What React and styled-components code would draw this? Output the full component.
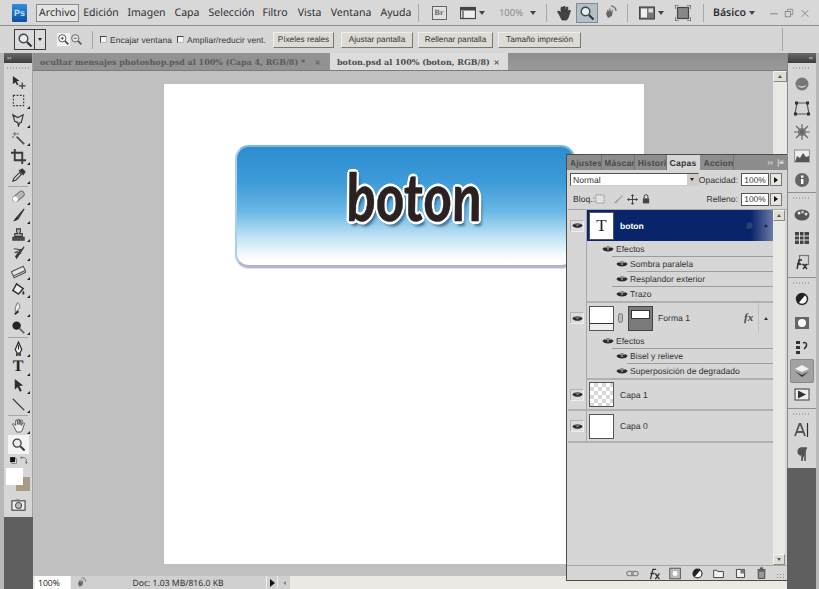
import React from 'react';
import styled, { createGlobalStyle } from 'styled-components';

const ui = `"Noto Sans", "Liberation Sans", sans-serif`;
const small = `"Liberation Sans", "Noto Sans", sans-serif`;

const Global = createGlobalStyle`
  html, body { margin: 0; padding: 0; background: #5f5f5f; overflow: hidden; }
  * { box-sizing: border-box; }
  #root { text-rendering: geometricPrecision; }
`;

/* ---------- shell ---------- */
const Frame = styled.div`
  width: 819px;
  height: 589px;
  display: flex;
  flex-direction: column;
  background: #d6d6d6;
  font-family: ${ui};
  color: #333;
  overflow: hidden;
`;

const MenuBar = styled.div`
  height: 26px;
  display: flex;
  align-items: center;
  padding-left: 12px;
  background: #d8d8d8;
  border-bottom: 1px solid #8e8e8e;
`;

const Logo = styled.div`
  width: 15px;
  height: 18px;
  margin-right: 9px;
  display: flex;
  align-items: center;
  justify-content: center;
  font: bold 9px "Liberation Sans", sans-serif;
  color: #bfe3ff;
  background: linear-gradient(#2f8fdc, #0f4f9e);
  border-radius: 1px;
`;

const MenuItem = styled.div`
  width: ${p => p.$w}px;
  height: 18px;
  margin-right: ${p => p.$gap || 0}px;
  display: flex;
  align-items: center;
  justify-content: center;
  font-size: 10.5px;
  font-weight: ${p => (p.$bold ? 600 : 400)};
  color: #2e2e2e;
  white-space: nowrap;
  background: ${p => (p.$active ? '#e4e4e4' : 'transparent')};
  border: 1px solid ${p => (p.$active ? '#8a8a8a' : 'transparent')};
`;

const BarSep = styled.div`
  width: 1px;
  height: 18px;
  background: #a8a8a8;
  margin: 0 ${p => p.$r || 0}px 0 ${p => p.$l || 0}px;
`;

const BarIcon = styled.div`
  width: ${p => p.$w || 20}px;
  height: 20px;
  margin-right: ${p => p.$gap || 0}px;
  display: flex;
  align-items: center;
  justify-content: center;
  font-size: 9.5px;
  color: ${p => p.$c || '#555'};
  background: ${p => (p.$active ? '#b4c0c8' : 'transparent')};
  border: 1px solid ${p => (p.$active ? '#808a90' : 'transparent')};
`;

const BridgeBox = styled.div`
  width: 15px;
  height: 14px;
  display: flex;
  align-items: center;
  justify-content: center;
  font: bold 8px "Liberation Serif", serif;
  color: #666;
  background: #e0e0e0;
  border: 1px solid #666;
`;

const Caret = styled.span`
  margin-left: ${p => p.$l || 0}px;
  margin-right: ${p => p.$r || 0}px;
  border-left: 3px solid transparent;
  border-right: 3px solid transparent;
  border-top: 4px solid #444;
`;

const OptionsBar = styled.div`
  height: 27px;
  display: flex;
  align-items: center;
  padding-left: 14px;
  background: #d6d6d6;
  position: relative;
`;

const ToolPick = styled.div`
  width: 32px;
  height: 21px;
  display: flex;
  border: 1px solid #3c3c3c;
  margin-right: 11px;
  background: #dcdcdc;
`;

const ToolPickMain = styled.div`
  width: 20px;
  display: flex;
  align-items: center;
  justify-content: center;
  border-right: 1px solid #3c3c3c;
`;

const ToolPickArrow = styled.div`
  flex: 1;
  display: flex;
  align-items: center;
  justify-content: center;
  &::after {
    content: '';
    border-left: 2.5px solid transparent;
    border-right: 2.5px solid transparent;
    border-top: 3px solid #222;
  }
`;

const ZoomToggle = styled.span`
  display: flex;
  background: ${p => (p.$on ? '#f2f2f2' : 'transparent')};
`;

const OptCheck = styled.label`
  display: flex;
  align-items: center;
  gap: 3px;
  width: ${p => p.$w}px;
  font: 8.4px ${small};
  letter-spacing: 0.1px;
  color: #333;
  white-space: nowrap;
`;

const CheckBox = styled.span`
  width: 7px;
  height: 7px;
  background: #f4f4f4;
  border: 1px solid #444;
  border-right-color: #bbb;
  border-bottom-color: #bbb;
`;

const OptButton = styled.div`
  width: ${p => p.$w}px;
  height: 16px;
  margin-right: ${p => p.$gap}px;
  display: flex;
  align-items: center;
  justify-content: center;
  font: 8.2px ${small};
  color: #333;
  white-space: nowrap;
  background: #dedbd4;
  border: 1px solid #eee;
  border-right-color: #777;
  border-bottom-color: #777;
`;

const OptEnd = styled.div`
  position: absolute;
  left: 782px;
  top: 2px;
  bottom: 2px;
  width: 1px;
  background: #a4a4a4;
`;

const Workspace = styled.div`
  flex: 1;
  display: flex;
  position: relative;
  min-height: 0;
`;

/* ---------- left toolbox ---------- */
const ToolRail = styled.div`
  width: 33px;
  display: flex;
  flex-direction: column;
  padding-left: 4px;
  background: linear-gradient(#b8b8b8, #b8b8b8) left / 4px 100% no-repeat, #5f5f5f;
`;

const ToolBox = styled.div`
  height: 464px;
  display: flex;
  flex-direction: column;
  align-items: center;
  background: #d6d6d6;
  border-right: 1px solid #a0a0a0;
`;

const DarkCap = styled.div`
  align-self: stretch;
  height: ${p => p.$h || 10}px;
  display: flex;
  align-items: center;
  justify-content: ${p => (p.$end ? 'flex-end' : 'flex-start')};
  padding: 0 3px;
  background: linear-gradient(#6a6a6a, #3c3c3c);
  color: #ddd;
  font-size: 7px;
  line-height: 1;
`;

const Grip = styled.div`
  align-self: stretch;
  height: ${p => p.$h || 10}px;
  margin: 0 ${p => p.$m || 3}px;
  background: repeating-linear-gradient(90deg, #aaa 0 1px, transparent 1px 3px) center / 100% 2px no-repeat;
`;

const Tool = styled.div`
  position: relative;
  width: 21px;
  height: 18.6px;
  display: flex;
  align-items: center;
  justify-content: center;
  background: ${p => (p.$active ? '#f4f4f4' : 'transparent')};
  &::after {
    content: ${p => (p.$more ? "''" : 'none')};
    position: absolute;
    right: -1px;
    bottom: 1px;
    border-left: 3px solid transparent;
    border-bottom: 3px solid #222;
  }
`;

const TypeTool = styled.span`
  font: bold 16px "Liberation Serif", serif;
  color: #222;
`;

const ToolSep = styled.div`
  align-self: stretch;
  height: 1px;
  margin: 1px 4px;
  background: #a6a6a6;
`;

const MiniColors = styled.div`
  width: 21px;
  height: 11px;
  margin-top: 1px;
  display: flex;
  align-items: center;
  justify-content: space-between;
  padding: 0 1px;
`;

const Swatches = styled.div`
  position: relative;
  width: 25px;
  height: 25px;
  margin: 2px 0 3px 0;
`;

const Swatch = styled.div`
  position: absolute;
  left: ${p => p.$l}px;
  top: ${p => p.$t}px;
  width: ${p => p.$s}px;
  height: ${p => p.$s}px;
  background: ${p => p.$c};
`;

/* ---------- document ---------- */
const DocColumn = styled.div`
  flex: 1;
  min-width: 0;
  display: flex;
  flex-direction: column;
  background: #c0c0c0;
`;

const TabBar = styled.div`
  height: 18px;
  display: flex;
  background: linear-gradient(#8e8e8e, #9a9a9a);
  border-bottom: 1px solid #7c7c7c;
`;

const DocTab = styled.div`
  width: ${p => p.$w}px;
  display: flex;
  align-items: center;
  justify-content: space-between;
  padding: 0 8px 0 7px;
  margin-right: 1px;
  font: bold 8px "DejaVu Serif", "Liberation Serif", serif;
  white-space: nowrap;
  color: ${p => (p.$active ? '#4a4a4a' : '#5a5a5a')};
  background: ${p => (p.$active ? '#dcdcdc' : '#929292')};
`;

const DocMiddle = styled.div`
  flex: 1;
  display: flex;
  min-height: 0;
`;

const Pasteboard = styled.div`
  flex: 1;
  display: flex;
  align-items: center;
  justify-content: center;
  padding-left: 2px;
`;

const Sheet = styled.div`
  width: 480px;
  height: 480px;
  background: #fff;
  padding: 61px 0 0 71px;
`;

const WebButton = styled.div`
  width: 340px;
  height: 123px;
  padding: 0 0 18px 18px;
  display: flex;
  align-items: center;
  justify-content: center;
  border-radius: 14px;
  background: linear-gradient(#2c8dcf 0%, #3f9bd9 30%, #6ab8e6 55%, #b0dbf1 72%, #f0f8fc 90%, #ffffff 97%);
  border: 2px solid #7db7de;
  border-bottom: 3px solid #b8b1d2;
  border-left-color: #a9d0ea;
  box-shadow: 0 1px 1px #ddd;
`;

const ButtonLabel = styled.div`
  font: italic bold 66px "Lato", "Noto Sans", sans-serif;
  line-height: 1;
  color: #2a2222;
  transform: scaleX(0.83) skewX(6deg);
  -webkit-text-stroke: 0.5px #2a2222;
  text-shadow: 3px 0 0 #fff, -3px 0 0 #fff, 0 3px 0 #fff, 0 -3px 0 #fff,
    2px 2px 0 #fff, -2px 2px 0 #fff, 2px -2px 0 #fff, -2px -2px 0 #fff,
    3px 5px 3px rgba(20, 50, 90, 0.6);
`;

const VScroll = styled.div`
  width: ${p => p.$w || 14}px;
  display: flex;
  flex-direction: column;
  justify-content: space-between;
  background: #e8e8e4;
`;

const ScrollBtn = styled.div`
  height: 11px;
  display: flex;
  align-items: center;
  justify-content: center;
  background: #e0ddd2;
  border: 1px solid #f4f4f4;
  border-right-color: #8a8a8a;
  border-bottom-color: #8a8a8a;
  &::after {
    content: '';
    border-left: 2.5px solid transparent;
    border-right: 2.5px solid transparent;
    border-${p => (p.$down ? 'top' : 'bottom')}: 3px solid #555;
  }
`;

const StatusBar = styled.div`
  height: 13px;
  display: flex;
  font-size: 8.6px;
  background: #ece9e4;
  padding-left: 2px;
`;

const StatusZoom = styled.div`
  width: 35px;
  padding-left: 3px;
  display: flex;
  align-items: center;
  background: #fff;
  color: #333;
`;

const StatusBtn = styled.div`
  width: ${p => p.$w}px;
  display: flex;
  align-items: center;
  justify-content: center;
  background: #d0d0d0;
  border-left: 1px solid #eee;
`;

const StatusText = styled.div`
  width: 176px;
  display: flex;
  align-items: center;
  justify-content: center;
  background: #d0d0d0;
`;

const PlayArrow = styled.span`
  border-top: ${p => p.$s || 4}px solid transparent;
  border-bottom: ${p => p.$s || 4}px solid transparent;
  border-left: ${p => (p.$s || 4) + 1}px solid #111;
`;

const BackArrow = styled.span`
  border-top: 2px solid transparent;
  border-bottom: 2px solid transparent;
  border-right: 3px solid #888;
`;

/* ---------- right dock ---------- */
const DockRail = styled.div`
  width: 32px;
  display: flex;
  flex-direction: column;
  padding-right: 3px;
  background: linear-gradient(#b8b8b8, #b8b8b8) right top / 3px 100% no-repeat, #5f5f5f;
`;

const Dock = styled.div`
  height: 415px;
  display: flex;
  flex-direction: column;
  align-items: center;
  background: #d6d6d6;
  border-left: 1px solid #8a8a8a;
`;

const DockGroup = styled.div`
  align-self: stretch;
  display: flex;
  flex-direction: column;
  align-items: center;
  height: ${p => p.$h}px;
  border-bottom: ${p => (p.$last ? 'none' : '1px solid #8f8f8f')};
`;

const DockItem = styled.div`
  width: 24px;
  height: 24px;
  display: flex;
  align-items: center;
  justify-content: center;
  background: ${p => (p.$active ? '#a2a2a2' : 'transparent')};
  border-radius: 2px;
  border: 1px solid ${p => (p.$active ? '#8a8a8a' : 'transparent')};
`;

/* ---------- layers panel ---------- */
const Panel = styled.div`
  position: absolute;
  left: 566px;
  top: 101px;
  width: 221px;
  height: 427px;
  display: flex;
  flex-direction: column;
  background: #d6d6d6;
  border: 1px solid #4c4c4c;
  border-right: none;
  font-family: ${small};
`;

const PanelTabs = styled.div`
  height: 15px;
  display: flex;
  align-items: flex-end;
  padding-left: 4px;
  background: #8d8d8d;
`;

const PanelTab = styled.div`
  width: ${p => p.$w}px;
  height: 15px;
  display: flex;
  align-items: center;
  justify-content: center;
  overflow: hidden;
  margin-right: ${p => p.$gap || 0}px;
  font-size: 8.6px;
  font-weight: 700;
  letter-spacing: 0.2px;
  white-space: nowrap;
  color: ${p => (p.$active ? '#333' : '#4a4a4a')};
  background: ${p => (p.$active ? '#d6d6d6' : '#8d8d8d')};
  border-right: 1px solid ${p => (p.$active ? '#d6d6d6' : '#747474')};
`;

const PanelMenu = styled.div`
  margin-left: auto;
  height: 15px;
  display: flex;
  align-items: center;
  gap: 5px;
  padding-right: 3px;
  color: #eee;
  font-size: 8px;
`;

const PanelRow = styled.div`
  height: ${p => p.$h}px;
  display: flex;
  align-items: center;
  padding: 0 5px 0 3px;
  font-size: 8.6px;
  color: #333;
`;

const Select = styled.div`
  width: 129px;
  height: 13px;
  display: flex;
  align-items: center;
  justify-content: space-between;
  padding-left: 2px;
  background: #fff;
  border: 1px solid #555;
  border-right-color: #ccc;
  border-bottom-color: #ccc;
`;

const SelectArrow = styled.span`
  width: 11px;
  height: 11px;
  display: flex;
  align-items: center;
  justify-content: center;
  background: #cfcdc6;
  &::after {
    content: '';
    border-left: 2.5px solid transparent;
    border-right: 2.5px solid transparent;
    border-top: 3px solid #222;
  }
`;

const LockLabel = styled.span`
  width: 20px;
  margin-left: 3px;
  white-space: nowrap;
`;

const RowLabel = styled.span`
  margin-left: auto;
  margin-right: 3px;
`;

const NumberBox = styled.div`
  width: 28px;
  height: 13px;
  display: flex;
  align-items: center;
  justify-content: center;
  background: #fff;
  border: 1px solid #555;
  font-size: 8.4px;
`;

const NumberArrow = styled.div`
  width: 12px;
  height: 13px;
  margin-left: 1px;
  display: flex;
  align-items: center;
  justify-content: center;
  background: #e8e6df;
  border: 1px solid #777;
`;

const LockIcon = styled.span`
  width: 14px;
  margin-right: ${p => p.$gap || 0}px;
  display: flex;
  justify-content: center;
`;

const PanelBody = styled.div`
  flex: 1;
  display: flex;
  min-height: 0;
  margin-left: 1px;
  border-top: 1px solid #a8a8a8;
`;

const LayerList = styled.div`
  width: 205px;
  display: flex;
  flex-direction: column;
`;

const Layer = styled.div`
  display: flex;
  height: ${p => p.$h}px;
  border-bottom: ${p => (p.$line ? '2px solid #b0b0b0' : 'none')};
`;

const EyeCell = styled.div`
  width: 19px;
  flex: none;
  display: flex;
  align-items: center;
  justify-content: center;
  border-right: 1px solid #a8a8a8;
`;

const EyeBox = styled.div`
  width: 14px;
  height: 12px;
  display: flex;
  align-items: center;
  justify-content: center;
  background: #dcdcdc;
  border: 1px solid #eee;
  border-top-color: #b4b4b4;
  border-left-color: #b4b4b4;
`;

const LayerMain = styled.div`
  flex: 1;
  display: flex;
  align-items: center;
  padding-left: 2px;
  font-size: 8.6px;
  color: ${p => (p.$selected ? '#fff' : '#333')};
  font-weight: ${p => (p.$selected ? 700 : 400)};
  background: ${p => (p.$selected ? 'linear-gradient(90deg, #0a246a 0 88%, #6b7aa6 100%)' : 'transparent')};
`;

const Thumb = styled.div`
  width: 25px;
  height: ${p => p.$h || 25}px;
  flex: none;
  display: flex;
  align-items: center;
  justify-content: center;
  background: #fff;
  border: 1px solid #555;
  font: 17px "Liberation Serif", serif;
  color: #222;
`;

const CheckerThumb = styled(Thumb)`
  background-color: #fff;
  background-image: linear-gradient(45deg, #d8d8d8 25%, transparent 25%, transparent 75%, #d8d8d8 75%),
    linear-gradient(45deg, #d8d8d8 25%, transparent 25%, transparent 75%, #d8d8d8 75%);
  background-size: 8px 8px;
  background-position: 0 0, 4px 4px;
`;

const ShapeThumb = styled(Thumb)`
  position: relative;
  &::after {
    content: '';
    position: absolute;
    left: 0;
    right: 0;
    bottom: 0;
    height: 6px;
    border-top: 1px solid #333;
    background: #eee;
  }
`;

const MaskThumb = styled(Thumb)`
  align-items: flex-start;
  padding-top: 3px;
  background: #7a7a7a;
  border-color: #444;
  &::after {
    content: '';
    width: 17px;
    height: 7px;
    background: #fff;
    border: 1px solid #333;
  }
`;

const LinkMark = styled.span`
  width: 5px;
  height: 10px;
  margin: 0 5px 0 4px;
  flex: none;
  border: 1px solid #777;
  border-radius: 3px;
  background: #bbb;
`;

const LayerName = styled.span`
  margin-left: ${p => p.$l || 6}px;
  flex: 1;
`;

const FxMark = styled.span`
  width: 14px;
  font: italic bold 11px "Liberation Serif", serif;
  color: #444;
`;

const CollapseCell = styled.span`
  width: 15px;
  align-self: stretch;
  display: flex;
  align-items: center;
  justify-content: center;
  border-left: 1px solid ${p => (p.$dark ? 'transparent' : '#c0c0c0')};
  &::after {
    content: '';
    border-left: 2.5px solid transparent;
    border-right: 2.5px solid transparent;
    border-bottom: 3px solid ${p => (p.$dark ? '#0a246a' : '#333')};
  }
`;

const EffectBlock = styled.div`
  display: flex;
  flex-direction: column;
  margin-left: 18px;
  border-left: 1px solid #a8a8a8;
  border-bottom: 2px solid #b0b0b0;
  margin-bottom: 0;
`;

const EffectRow = styled.div`
  height: ${p => p.$h || 14}px;
  display: flex;
  align-items: center;
  gap: 2px;
  padding-left: ${p => p.$in}px;
  font-size: 8.6px;
  color: #333;
`;

const EffectLine = styled.div`
  height: 1px;
  margin-left: ${p => p.$in}px;
  background: #9c9c9c;
`;

const PanelFoot = styled.div`
  height: 15px;
  display: flex;
  align-items: center;
  border-top: 1px solid #a8a8a8;
  position: relative;
`;

const FootGap = styled.span`
  width: 55px;
`;

const FootIcon = styled.span`
  width: 21.5px;
  display: flex;
  justify-content: center;
`;

const FootGrip = styled.span`
  position: absolute;
  right: 2px;
  bottom: 2px;
  width: 9px;
  height: 5px;
  background: radial-gradient(#888 40%, transparent 45%) 0 0 / 3px 3px;
`;

/* ---------- drawings ---------- */
const Svg = ({ s = 16, children }) => (
  <svg width={s} height={s} viewBox="0 0 16 16" fill="none" stroke="#3a3a3a" strokeWidth="1.2">
    {children}
  </svg>
);

const D = '#2e2e2e';
const icons = {
  move: <><path d="M2 1l7 5-3 1 2 3-1.500 .8-2-3-2.500 2z" fill={D} stroke="none" /><path d="M12 8v7M8.500 11.500h7" strokeWidth="1.300" /></>,
  marquee: <rect x="2.500" y="2.500" width="11" height="11" strokeDasharray="2 1.500" />,
  lasso: <path d="M2 3l5 3 6-3-2 8-2 1-1 3-1-4-3-1z" strokeWidth="1.300" />,
  wand: <><path d="M14 14L6 6" strokeWidth="2" stroke="#555" /><path d="M4 1v4M2 3h4M1 7l2-1M8 2L7 4" stroke="#777" /></>,
  crop: <path d="M4 0v12h12M0 4h12v12" strokeWidth="2" />,
  dropper: <><path d="M2 14l1-3 6-6 2 2-6 6z" fill="#ddd" /><path d="M9 3l3-2 3 3-2 3z" fill={D} /></>,
  heal: <g transform="rotate(-40 8 8)"><rect x="1" y="5" width="14" height="6" rx="3" fill="#b8b8b8" stroke="#777" /><rect x="1" y="5" width="5" height="6" rx="2.500" fill="#fff" stroke="none" /></g>,
  brush: <><path d="M14 1L6 10l1.500 1.500z" fill="#555" /><path d="M6 10c-2 0-2 3-4 4 3 0 5-1 5.500-2.500z" fill={D} stroke="none" /></>,
  stamp: <><path d="M6 2h4v3l-1 2h3v3H4V7h3L6 5z" fill="#bbb" /><rect x="2" y="11" width="12" height="3" fill="#555" /></>,
  history: <><path d="M3 4l8 1-7 3 7 1" strokeWidth="1" /><path d="M14 2L5 12l1 2z" fill={D} /></>,
  eraser: <g transform="rotate(-25 8 8)"><rect x="1" y="5" width="14" height="7" fill="#e4e4e4" stroke="#555" /><path d="M1 10h14" stroke="#555" /></g>,
  bucket: <><path d="M6 2l7 5-5 6-6-4z" fill="#eee" stroke={D} strokeWidth="1.500" /><path d="M13 9c1 2 2 3 1 4s-2 0-2-1z" fill={D} stroke="none" /></>,
  dodge: <><path d="M7 2c3 2 3 5 1 7L5 12c-1-3 0-7 2-10z" fill="#f2f2f2" stroke="#888" /><path d="M4 14l4-3" stroke={D} strokeWidth="2" /></>,
  sponge: <><circle cx="6" cy="6" r="4.500" fill="#222" stroke="none" /><path d="M9 9l5 5" stroke="#666" strokeWidth="2" /></>,
  pen: <><path d="M8 1l3.500 8-2 4h-3l-2-4z" fill="#eee" stroke={D} strokeWidth="1.300" /><path d="M8 4v5M6 14h4v2H6z" stroke={D} /></>,
  arrow: <path d="M4 1l9 7-4 .6 2.500 5-2 1-2.500-5-3 3z" fill={D} stroke="none" />,
  line: <path d="M2 2l12 12" strokeWidth="1.500" />,
  hand: <path d="M3 9L1.500 6.500 3 6l2 2V2.500L6.500 2 7.500 7V1.500L9 1.500 9.500 7l1-5 1.500.5-1 5.500 2-3 1.500.7L12 13l-1.500 2H6z" fill="#eee" stroke="#555" strokeWidth="1" />,
  handDark: <path d="M3 9L1.500 6.500 3 6l2 2V2.500L6.500 2 7.500 7V1.500L9 1.500 9.500 7l1-5 1.500.5-1 5.500 2-3 1.500.7L12 13l-1.500 2H6z" fill="#444" stroke="#333" strokeWidth=".8" />,
  zoom: <><circle cx="6.500" cy="6.500" r="4.300" fill="#e4eef4" stroke="#444" strokeWidth="1.400" /><path d="M10 10l4.500 4.500" stroke="#333" strokeWidth="2.200" /></>,
  zoomIn: <><circle cx="6.500" cy="6.500" r="4.500" fill="#fff" stroke="#555" /><path d="M4.500 6.500h4M6.500 4.500v4" stroke="#555" /><path d="M10 10l4 4" stroke="#444" strokeWidth="2" /></>,
  zoomOut: <><circle cx="6.500" cy="6.500" r="4.500" fill="#e4e4e4" stroke="#666" /><path d="M4.500 6.500h4" stroke="#666" /><path d="M10 10l4 4" stroke="#555" strokeWidth="2" /></>,
  mask: <><rect x="1" y="3" width="14" height="10" fill="#eee" stroke="#444" /><circle cx="8" cy="8" r="3.200" fill="#bbb" stroke="#555" /><rect x="5" y="1.500" width="4" height="2" fill="#777" stroke="none" /></>,
  swap: <path d="M3 3h7l3 3v7M3 3l2-2M3 3l2 2M13 13l-2-2M13 13l2-2" stroke="#444" />,
  defaults: <><rect x="5" y="5" width="8" height="8" fill="#fff" stroke="#555" /><rect x="2" y="2" width="9" height="9" fill="#111" stroke="none" /></>,
  navigator: <><circle cx="8" cy="8" r="6.500" fill="#777" stroke="none" /><path d="M3.500 9a5 5 0 0 0 9 0c-3 2-6 2-9 0z" fill="#eee" stroke="none" /></>,
  anchors: <><path d="M3 3h10l2 11H1z" stroke="#555" /><rect x="1" y="1.500" width="3" height="3" fill={D} stroke="none" /><rect x="12" y="1.500" width="3" height="3" fill={D} stroke="none" /><rect x="0" y="12.500" width="3" height="3" fill={D} stroke="none" /><rect x="13" y="12.500" width="3" height="3" fill={D} stroke="none" /></>,
  burst: <><circle cx="8" cy="8" r="4" fill="#888" stroke="none" /><path d="M8 0v16M0 8h16M2 2l12 12M14 2L2 14" stroke="#666" /></>,
  histogram: <><rect x="0.500" y="2" width="15" height="12" fill="#eee" stroke="#999" /><path d="M1 14l2-6 3 2 3-5 3 4 3-1v6z" fill="#555" stroke="none" /></>,
  info: <><circle cx="8" cy="8" r="7" fill="#666" stroke="none" /><rect x="7" y="7" width="2.400" height="5" fill="#fff" stroke="none" /><rect x="7" y="3.500" width="2.400" height="2.200" fill="#fff" stroke="none" /></>,
  palette: <><ellipse cx="8" cy="9" rx="7.500" ry="5.500" fill="#555" stroke="none" /><circle cx="5" cy="7" r="1.500" fill="#eee" stroke="none" /><circle cx="8.500" cy="6" r="1.500" fill="#bbb" stroke="none" /><circle cx="12" cy="8" r="1.500" fill="#ddd" stroke="none" /></>,
  grid: <><rect x="1" y="2" width="14" height="12" fill="#444" stroke="none" /><path d="M1 6h14M1 10h14M5.500 2v12M10 2v12" stroke="#ddd" strokeWidth="1" /></>,
  fxBox: <><rect x="5.500" y="1.500" width="9" height="9" stroke="#777" /><path d="M3 15l2-9h3M3 10h4M9 10l4 5M13 10l-4 5" stroke={D} strokeWidth="1.400" /></>,
  adjust: <><circle cx="8" cy="8" r="5.500" fill="#fff" stroke="#333" strokeWidth="1.500" /><path d="M8 2.500a5.500 5.500 0 0 0 0 11z" fill="#222" stroke="none" transform="rotate(40 8 8)" /></>,
  maskPanel: <><rect x="1" y="2" width="14" height="12" fill="#666" stroke="none" /><circle cx="8" cy="8" r="4" fill="#fff" stroke="none" /></>,
  channels: <><path d="M2 2h4v3H2zM2 7h4v3H2zM2 12h4v3H2z" fill="#333" stroke="none" /><path d="M9 4c4-2 5 3 1 6" stroke="#333" strokeWidth="1.500" /></>,
  layers: <><path d="M8 9L1 6l7-4 7 4z" fill="#f0f0f0" stroke="none" /><path d="M1 8.500l7 3.500 7-3.500-7 5.500z" fill="#333" stroke="none" /></>,
  actions: <><rect x="1" y="2" width="14" height="11" fill="#eee" stroke="#555" /><path d="M4 3.500l8 4-8 4z" fill="#333" stroke="none" /></>,
  chars: <><path d="M1 14L5.500 2h1L11 14M3 10h6" stroke="#555" strokeWidth="1.800" /><path d="M13.500 1v14" stroke={D} /></>,
  para: <path d="M11 15V2M8 15V9C3 9 3 2 8 2h5" fill="#555" stroke="#555" strokeWidth="1.600" />,
  arrange: <><rect x="0.500" y="2.500" width="15" height="11" fill="#eee" stroke="#444" /><rect x="1" y="3" width="14" height="2.500" fill="#444" stroke="none" /><path d="M3 6v7" stroke="#444" /></>,
  rotate: <><path d="M4 9l2-5 1 3 1-5 1 5 2-3-1 7-4 2z" fill="#666" stroke="none" /><path d="M9 1a5 5 0 0 1 5 5" stroke="#777" strokeWidth="1.500" /></>,
  layout: <><rect x="0.500" y="2" width="15" height="12" fill="#777" stroke="#444" /><rect x="2" y="3.500" width="6" height="9" fill="#eee" stroke="none" /><rect x="9.500" y="3.500" width="4.500" height="4" fill="#ddd" stroke="none" /></>,
  screen: <><rect x="2.500" y="2.500" width="11" height="11" fill="#888" stroke="#444" /><path d="M0 4V0h4M12 0h4v4M16 12v4h-4M4 16H0v-4" stroke="#444" /></>,
  minimize: <path d="M3 9h10" stroke="#888" strokeWidth="1.400" />,
  restore: <><rect x="3" y="6" width="7" height="7" stroke="#888" /><path d="M6 6V3h7v7h-3" stroke="#888" /></>,
  close: <path d="M3.500 4l9 9M12.500 4l-9 9" stroke="#888" strokeWidth="1.300" />,
  link: <><rect x="1" y="5.500" width="8" height="5" rx="2.500" stroke="#888" strokeWidth="1.500" /><rect x="7" y="5.500" width="8" height="5" rx="2.500" stroke="#888" strokeWidth="1.500" /></>,
  fxFoot: <path d="M3 15l3-12h4M3 8h5M9 8l5 7M14 8l-5 7" stroke="#333" strokeWidth="1.600" />,
  addMask: <><rect x="1" y="1.500" width="13" height="13" fill="#bbb" stroke="#555" /><circle cx="7.500" cy="8" r="3" fill="#fff" stroke="none" /></>,
  folder: <path d="M2 4h4l1 1.500h7V13H2z" fill="#f2f2f2" stroke="#444" />,
  newLayer: <><path d="M3 3h10v10H3z" fill="#f2f2f2" stroke="#444" /><path d="M13 3L8 3v5h5z" fill="#777" stroke="none" /></>,
  trash: <><path d="M4 5h8v9H4z" fill="#999" stroke="#444" /><path d="M3 3.500h10M6 1.500h4" stroke="#333" strokeWidth="1.500" /></>,
  brushLock: <path d="M13 2L6 9c-2 0-2 3-4 4 3 0 5-1 5-3l7-7z" fill="#aaa" stroke="#999" strokeWidth=".7" />,
  moveLock: <path d="M8 1v14M1 8h14M6 3l2-2 2 2M6 13l2 2 2-2M3 6L1 8l2 2M13 6l2 2-2 2" stroke="#333" strokeWidth="1.300" />,
  padlock: <><rect x="3" y="7" width="10" height="8" fill="#444" stroke="none" /><path d="M5 7V4a3 3 0 0 1 6 0v3" stroke="#444" strokeWidth="1.600" /></>,
  checkLock: <rect x="1.500" y="1.500" width="13" height="13" fill="#e4e4e4" stroke="#777" strokeDasharray="2 1" />,
  styleMark: <path d="M3 14l2-9h5l3 3-2 6z" fill="#2b3f78" stroke="none" />,
  eye: <><path d="M0.500 8C3 3.500 13 3.500 15.500 8 13 12.500 3 12.500 0.500 8z" fill="#2a2a2a" stroke="none" /><path d="M4 6h8" stroke="#bbb" strokeWidth=".9" /><circle cx="8" cy="8" r="1.500" fill="#888" stroke="none" /></>
};

const Icon = ({ n, s }) => <Svg s={s}>{icons[n]}</Svg>;

/* ---------- data ---------- */
const menu = [
  ['Edición', 32, 12],
  ['Imagen', 35, 11],
  ['Capa', 24, 11],
  ['Selección', 43, 10],
  ['Filtro', 24, 11],
  ['Vista', 23, 11],
  ['Ventana', 38, 11],
  ['Ayuda', 30, 7]
];

const toolGroups = [
  [['move'], ['marquee', 1], ['lasso', 1], ['wand', 1], ['crop', 1], ['dropper', 1]],
  [['heal', 1], ['brush', 1], ['stamp', 1], ['history', 1], ['eraser', 1], ['bucket', 1], ['dodge', 1], ['sponge', 1]],
  [['pen', 1], ['T', 1], ['arrow', 1], ['line', 1]]
];

const dockGroups = [
  { h: 130, items: ['navigator', 'anchors', 'burst', 'histogram', 'info'] },
  { h: 85, items: ['palette', 'grid', 'fxBox'] },
  { h: 131, items: ['adjust', 'maskPanel', 'channels', 'layers', 'actions'] },
  { h: 59, items: ['chars', 'para'], last: true }
];

const Eye = () => (
  <EyeBox>
    <Icon n="eye" s={11} />
  </EyeBox>
);

const Effect = ({ name, sub, h }) => (
  <EffectRow $in={sub ? 29 : 15} $h={h}>
    <Icon n="eye" s={12} />
    <span>{name}</span>
  </EffectRow>
);

export default function App() {
  return (
    <Frame>
      <Global />
      <MenuBar>
        <Logo>Ps</Logo>
        <MenuItem $w={43} $active $gap={6}>Archivo</MenuItem>
        {menu.map(([t, w, g]) => (
          <MenuItem key={t} $w={w} $gap={g}>{t}</MenuItem>
        ))}
        <BarSep $r={10} />
        <BarIcon $gap={10}><BridgeBox>Br</BridgeBox></BarIcon>
        <BarIcon $w={18}><Icon n="arrange" /></BarIcon>
        <Caret $l={2} $r={12} />
        <BarIcon $w={28} $c="#888">100%</BarIcon>
        <Caret $l={5} />
        <BarSep $l={10} $r={7} />
        <BarIcon $gap={2}><Icon n="handDark" /></BarIcon>
        <BarIcon $w={22} $active $gap={2}><Icon n="zoom" /></BarIcon>
        <BarIcon $gap={7}><Icon n="rotate" /></BarIcon>
        <BarSep $r={9} />
        <BarIcon $w={19}><Icon n="layout" /></BarIcon>
        <Caret $l={2} $r={9} />
        <BarIcon $w={20}><Icon n="screen" /></BarIcon>
        <BarSep $l={10} $r={9} />
        <MenuItem $w={33} $bold>Básico</MenuItem>
        <Caret $l={3} $r={12} />
        <BarIcon $w={14}><Icon n="minimize" s={12} /></BarIcon>
        <BarIcon $w={16}><Icon n="restore" s={12} /></BarIcon>
        <BarIcon $w={16}><Icon n="close" s={12} /></BarIcon>
      </MenuBar>

      <OptionsBar>
        <ToolPick>
          <ToolPickMain><Icon n="zoom" /></ToolPickMain>
          <ToolPickArrow />
        </ToolPick>
        <ZoomToggle $on><Icon n="zoomIn" s={13} /></ZoomToggle>
        <ZoomToggle><Icon n="zoomOut" s={13} /></ZoomToggle>
        <BarSep $l={9} $r={7} />
        <OptCheck $w={77}><CheckBox />Encajar ventana</OptCheck>
        <OptCheck $w={96}><CheckBox />Ampliar/reducir vent.</OptCheck>
        <OptButton $w={61} $gap={7}>Píxeles reales</OptButton>
        <OptButton $w={72} $gap={5}>Ajustar pantalla</OptButton>
        <OptButton $w={75} $gap={5}>Rellenar pantalla</OptButton>
        <OptButton $w={83} $gap={0}>Tamaño impresión</OptButton>
        <OptEnd />
      </OptionsBar>

      <Workspace>
        <ToolRail>
          <ToolBox>
            <DarkCap>››</DarkCap>
            <Grip $h={10} />
            {toolGroups.map((group, i) => (
              <React.Fragment key={i}>
                {group.map(([n, more]) => (
                  <Tool key={n} $more={more}>
                    {n === 'T' ? <TypeTool>T</TypeTool> : <Icon n={n} s={15} />}
                  </Tool>
                ))}
                <ToolSep />
              </React.Fragment>
            ))}
            <Tool $more><Icon n="hand" s={15} /></Tool>
            <Tool $active><Icon n="zoom" s={15} /></Tool>
            <MiniColors>
              <Icon n="defaults" s={9} />
              <Icon n="swap" s={9} />
            </MiniColors>
            <Swatches>
              <Swatch $l={10} $t={9} $s={14} $c="#a99a85" />
              <Swatch $l={0} $t={0} $s={17} $c="#fff" />
            </Swatches>
            <Tool><Icon n="mask" s={15} /></Tool>
          </ToolBox>
        </ToolRail>

        <DocColumn>
          <TabBar>
            <DocTab $w={296}>
              ocultar mensajes photoshop.psd al 100% (Capa 4, RGB/8) * <span>×</span>
            </DocTab>
            <DocTab $w={178} $active>
              boton.psd al 100% (boton, RGB/8) <span>×</span>
            </DocTab>
          </TabBar>
          <DocMiddle>
            <Pasteboard>
              <Sheet>
                <WebButton>
                  <ButtonLabel>boton</ButtonLabel>
                </WebButton>
              </Sheet>
            </Pasteboard>
            <VScroll>
              <ScrollBtn />
              <ScrollBtn $down />
            </VScroll>
          </DocMiddle>
          <StatusBar>
            <StatusZoom>100%</StatusZoom>
            <StatusBtn $w={20}><Icon n="rotate" s={12} /></StatusBtn>
            <StatusText>Doc: 1.03 MB/816.0 KB</StatusText>
            <StatusBtn $w={11}><PlayArrow /></StatusBtn>
            <StatusBtn $w={13}><BackArrow /></StatusBtn>
          </StatusBar>
        </DocColumn>

        <DockRail>
          <Dock>
            <DarkCap $end>‹‹</DarkCap>
            {dockGroups.map(g => (
              <DockGroup key={g.items[0]} $h={g.h} $last={g.last}>
                <Grip $h={9} $m={5} />
                {g.items.map(n => (
                  <DockItem key={n} $active={n === 'layers'}><Icon n={n} s={16} /></DockItem>
                ))}
              </DockGroup>
            ))}
          </Dock>
        </DockRail>

        <Panel>
          <PanelTabs>
            <PanelTab $w={31} $gap={3}>Ajustes</PanelTab>
            <PanelTab $w={30} $gap={3}>Máscar</PanelTab>
            <PanelTab $w={29}>Histori</PanelTab>
            <PanelTab $w={33} $gap={4} $active>Capas</PanelTab>
            <PanelTab $w={30}>Accion</PanelTab>
            <PanelMenu>››&nbsp;&nbsp;|≡</PanelMenu>
          </PanelTabs>
          <PanelRow $h={19}>
            <Select>Normal<SelectArrow /></Select>
            <RowLabel>Opacidad:</RowLabel>
            <NumberBox>100%</NumberBox>
            <NumberArrow><PlayArrow $s={3} /></NumberArrow>
          </PanelRow>
          <PanelRow $h={20}>
            <LockLabel>Bloq.:</LockLabel>
            <LockIcon $gap={4}><Icon n="checkLock" s={10} /></LockIcon>
            <LockIcon><Icon n="brushLock" s={11} /></LockIcon>
            <LockIcon><Icon n="moveLock" s={11} /></LockIcon>
            <LockIcon><Icon n="padlock" s={10} /></LockIcon>
            <RowLabel>Relleno:</RowLabel>
            <NumberBox>100%</NumberBox>
            <NumberArrow><PlayArrow $s={3} /></NumberArrow>
          </PanelRow>
          <PanelBody>
            <LayerList>
              <Layer $h={31}>
                <EyeCell><Eye /></EyeCell>
                <LayerMain $selected>
                  <Thumb $h={28}>T</Thumb>
                  <LayerName>boton</LayerName>
                  <FxMark><Icon n="styleMark" s={11} /></FxMark>
                  <CollapseCell $dark />
                </LayerMain>
              </Layer>
              <EffectBlock>
                <Effect name="Efectos" h={15} />
                <EffectLine $in={25} />
                <Effect name="Sombra paralela" sub />
                <EffectLine $in={40} />
                <Effect name="Resplandor exterior" sub />
                <EffectLine $in={25} />
                <Effect name="Trazo" sub />
              </EffectBlock>
              <Layer $h={30}>
                <EyeCell><Eye /></EyeCell>
                <LayerMain>
                  <ShapeThumb />
                  <LinkMark />
                  <MaskThumb />
                  <LayerName $l={5}>Forma 1</LayerName>
                  <FxMark>fx</FxMark>
                  <CollapseCell />
                </LayerMain>
              </Layer>
              <EffectBlock>
                <Effect name="Efectos" h={15} />
                <EffectLine $in={25} />
                <Effect name="Bisel y relieve" sub />
                <EffectLine $in={40} />
                <Effect name="Superposición de degradado" sub />
              </EffectBlock>
              <Layer $h={31} $line>
                <EyeCell><Eye /></EyeCell>
                <LayerMain>
                  <CheckerThumb />
                  <LayerName>Capa 1</LayerName>
                </LayerMain>
              </Layer>
              <Layer $h={32} $line>
                <EyeCell><Eye /></EyeCell>
                <LayerMain>
                  <Thumb />
                  <LayerName>Capa 0</LayerName>
                </LayerMain>
              </Layer>
            </LayerList>
            <VScroll $w={12}>
              <ScrollBtn />
              <ScrollBtn $down />
            </VScroll>
          </PanelBody>
          <PanelFoot>
            <FootGap />
            {['link', 'fxFoot', 'addMask', 'adjust', 'folder', 'newLayer', 'trash'].map(n => (
              <FootIcon key={n}><Icon n={n} s={13} /></FootIcon>
            ))}
            <FootGrip />
          </PanelFoot>
        </Panel>
      </Workspace>
    </Frame>
  );
}
